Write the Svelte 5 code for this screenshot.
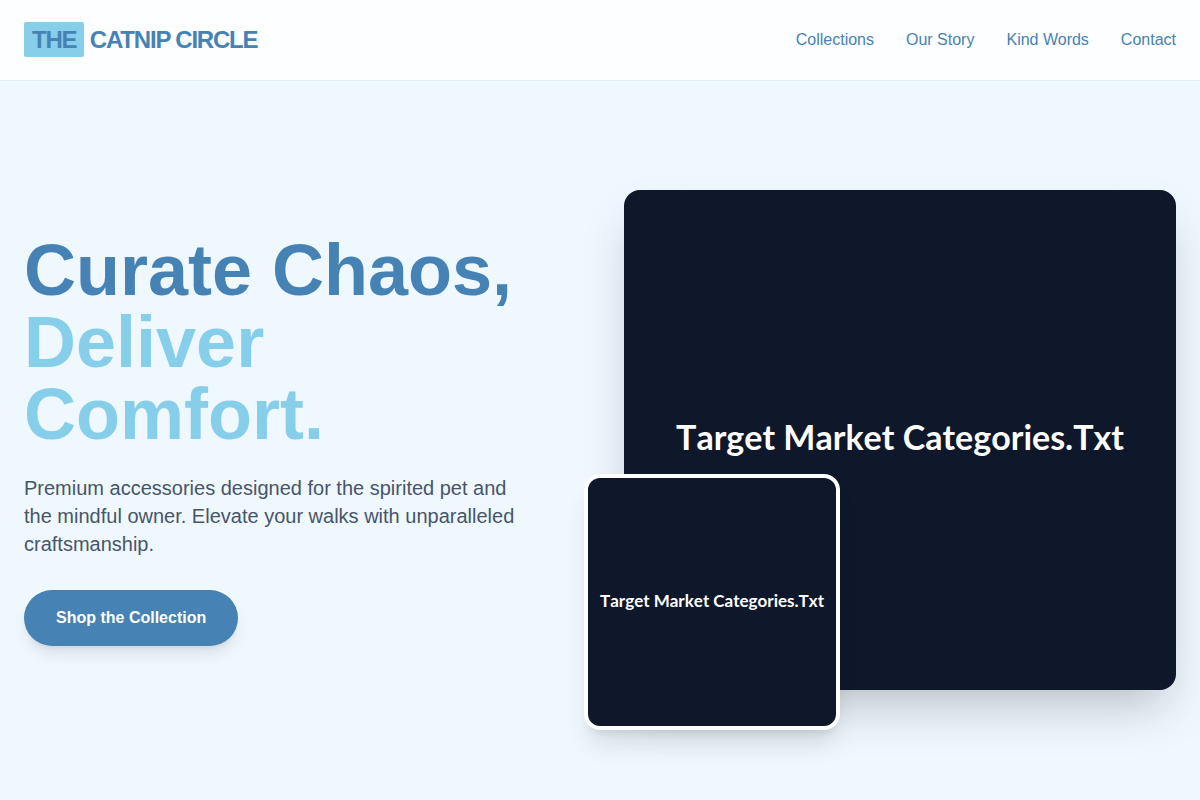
<script lang="ts">
	interface NavLink {
		label: string;
		href: string;
	}

	const links: NavLink[] = [
		{ label: 'Collections', href: '#collections' },
		{ label: 'Our Story', href: '#story' },
		{ label: 'Kind Words', href: '#testimonials' },
		{ label: 'Contact', href: '#contact' }
	];

	const imageLabel = 'Target Market Categories.Txt';
</script>

<svelte:head>
	<title>The Catnip Circle</title>
</svelte:head>

<header>
	<a class="logo" href="#top"><span class="logo-mark">THE</span> CATNIP CIRCLE</a>
	<nav>
		{#each links as link}
			<a href={link.href}>{link.label}</a>
		{/each}
	</nav>
</header>

<main id="top">
	<section class="hero">
		<div class="hero-text">
			<h1>Curate Chaos, <span class="accent">Deliver Comfort.</span></h1>
			<p>
				Premium accessories designed for the spirited pet and the mindful owner. Elevate your walks
				with unparalleled craftsmanship.
			</p>
			<a class="cta" href="#collections">Shop the Collection</a>
		</div>

		<div class="hero-media">
			<div class="image image-large">{imageLabel}</div>
			<div class="image image-small">{imageLabel}</div>
		</div>
	</section>
</main>

<style>
	:global(body) {
		margin: 0;
		font-family: 'Liberation Sans', Arial, sans-serif;
		background: #f0f8ff;
		color: #4682b4;
	}

	header {
		position: fixed;
		top: 0;
		left: 0;
		right: 0;
		z-index: 10;
		display: flex;
		align-items: center;
		justify-content: space-between;
		height: 80px;
		padding: 0 24px;
		background: #fdfeff;
		border-bottom: 1px solid #e1effa;
	}

	.logo {
		font-size: 24px;
		line-height: 32px;
		font-weight: 700;
		letter-spacing: -0.05em;
		color: #4682b4;
		text-decoration: none;
	}

	.logo-mark {
		padding: 4px 8px;
		background: #87ceeb;
		border-radius: 2px;
	}

	nav {
		display: flex;
		gap: 32px;
	}

	nav a {
		font-size: 16px;
		line-height: 24px;
		color: #4682b4;
		text-decoration: none;
	}

	nav a:hover {
		color: #87ceeb;
	}

	main {
		box-sizing: border-box;
		display: flex;
		align-items: center;
		min-height: 100vh;
		padding: 80px 24px 0;
		overflow: hidden;
	}

	.hero {
		display: grid;
		grid-template-columns: repeat(2, minmax(0, 1fr));
		gap: 48px;
		align-items: center;
		width: 100%;
		max-width: 1232px;
		margin: 0 auto;
	}

	h1 {
		margin: 0 0 24px;
		font-size: 72px;
		line-height: 72px;
		font-weight: 700;
	}

	.accent {
		color: #87ceeb;
	}

	.hero-text p {
		max-width: 512px;
		margin: 0 0 32px;
		font-size: 20px;
		line-height: 28px;
		color: #475569;
	}

	.cta {
		display: inline-block;
		padding: 16px 32px;
		border-radius: 28px;
		background: #4682b4;
		color: white;
		font-size: 16px;
		line-height: 24px;
		font-weight: 700;
		text-decoration: none;
		vertical-align: top;
		box-shadow:
			0 10px 15px -3px rgba(0, 0, 0, 0.1),
			0 4px 6px -4px rgba(0, 0, 0, 0.1);
	}

	.cta:hover {
		background: #3a6f9c;
	}

	.hero-media {
		position: relative;
	}

	.image {
		box-sizing: border-box;
		display: flex;
		align-items: center;
		justify-content: center;
		border-radius: 16px;
		background: #0f172a;
		color: white;
		font-family: Lato, sans-serif;
		font-weight: 700;
		font-kerning: none;
		white-space: nowrap;
	}

	.image-large {
		min-height: 500px;
		padding-bottom: 8px;
		font-size: 34px;
		box-shadow: 0 25px 50px -12px rgba(0, 0, 0, 0.25);
	}

	/* overlaps the lower left corner of the large image */
	.image-small {
		position: absolute;
		left: -40px;
		bottom: -40px;
		width: 256px;
		height: 256px;
		padding-bottom: 4px;
		border: 4px solid white;
		font-size: 17px;
		box-shadow:
			0 20px 25px -5px rgba(0, 0, 0, 0.1),
			0 8px 10px -6px rgba(0, 0, 0, 0.1);
	}
</style>
